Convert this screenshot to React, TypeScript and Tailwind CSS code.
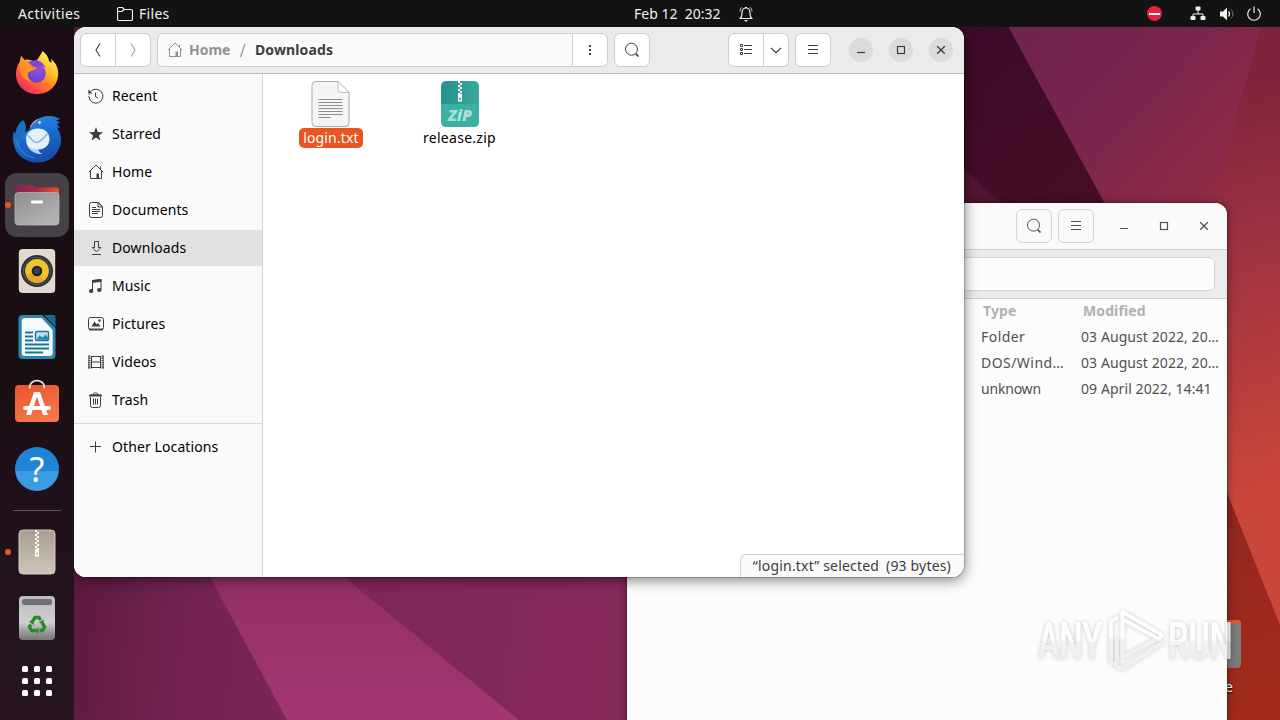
import type { ReactNode } from "react";

function Icon({ children, size = 16, className = "" }: { children: ReactNode; size?: number; className?: string }) {
  return (
    <svg width={size} height={size} viewBox="0 0 16 16" fill="none" stroke="currentColor" strokeWidth="1" className={"shrink-0 " + className}>
      {children}
    </svg>
  );
}

const HomeGlyph = () => (
  <>
    <path d="M.8 8.2 8 1l7.2 7.2M2.500 7v7.500h11V7M12.500 5.500V2.500" />
    <path d="M8.500 9.500h2.500v5H8.500z" fill="currentColor" stroke="none" />
  </>
);
const SearchGlyph = () => (
  <>
    <circle cx="7.500" cy="7.200" r="6" />
    <path d="m11.800 11.800 2.700 2.700" strokeWidth="1.700" />
  </>
);
const MenuGlyph = () => <path d="M3 3.500h10M3 7.500h10M3 11.500h10" />;

const glyphs: Record<string, ReactNode> = {
  Recent: (
    <>
      <path d="M2.200 4.200A7 7 0 1 1 1 9" strokeWidth="1" />
      <path d="M1 9a7 7 0 0 1 .3-3" strokeDasharray="1 1" />
      <path d="M.3 1.500v4h4z" fill="currentColor" stroke="none" />
      <path d="M7.500 4.500v4.200l2.500 1.300" />
    </>
  ),
  Starred: <path d="m8 1 1.800 5 5.200.2-4.100 3.200 1.500 5L8 11.500l-4.400 2.900 1.500-5L1 6.200 6.200 6z" fill="currentColor" stroke="none" />,
  Home: <HomeGlyph />,
  Documents: (
    <>
      <path d="M3.500.5h7l4 4v9a2 2 0 0 1-2 2h-9a2 2 0 0 1-2-2v-11a2 2 0 0 1 2-2z" />
      <path d="M10 .5v4.500h4.500zM4 5.500h4M4 7.500h8M4 9.500h8M4 11.500h6" />
    </>
  ),
  Downloads: <path d="M6.500 1.500h4v6h2.300L8.500 12 4.200 7.500h2.300zM4 14.500h9" />,
  Music: (
    <>
      <path d="M4.500 12.500v-10l8.500-1v10" />
      <path d="M4 2.300 13.500 1v2.800L4 5z" fill="currentColor" stroke="none" />
      <ellipse cx="3.200" cy="13" rx="2.200" ry="2" fill="currentColor" stroke="none" />
      <ellipse cx="11.300" cy="12" rx="2.200" ry="2" fill="currentColor" stroke="none" />
    </>
  ),
  Pictures: (
    <>
      <rect x=".5" y="1.500" width="15" height="12" rx="2" />
      <path d="M1 13.500h14" strokeWidth="1.800" />
      <path d="m3.500 10.500 3-5 2.200 3L10 7l2.500 3.500z" fill="currentColor" stroke="none" />
      <circle cx="11.500" cy="4.500" r="1.200" fill="currentColor" stroke="none" />
    </>
  ),
  Videos: (
    <>
      <path d="M3.500 2v12.500M12.500 2v12.500M3.500 2.500h9M3.500 8h9M3.500 13.500h9" />
      <path d="M1.500 1.500V15M14.500 1.500V15" strokeWidth="2" strokeDasharray="1.200 1" />
      <path d="M.8 1.500V15M15.300 1.500V15" strokeWidth=".8" />
    </>
  ),
  Trash: (
    <>
      <path d="M2.500 5v8.500a2 2 0 0 0 2 2h6a2 2 0 0 0 2-2V5" />
      <path d="M.8 4.500c0-1.800 1-2.300 3-2.300h7.400c2 0 3 .5 3 2.300z" fill="currentColor" stroke="none" />
      <path d="M5 2.500C5 .3 10 .3 10 2.500M5.500 6.500v6M7.500 6.500v6M9.500 6.500v6" />
    </>
  ),
  "Other Locations": <path d="M7.500 2.500v11M2 7.500h11" />,
};

const places = ["Recent", "Starred", "Home", "Documents", "Downloads", "Music", "Pictures", "Videos", "Trash"];

function Place({ name, active = false }: { name: string; active?: boolean }) {
  return (
    <div className={"flex h-9 items-center gap-2 pl-3.5 " + (active ? "bg-[#e1e1e1]" : "")}>
      <Icon className="text-[#3d3d3d]">{glyphs[name]}</Icon>
      <span className="tracking-[.1px] text-black">{name}</span>
    </div>
  );
}

function Wallpaper() {
  return (
    <svg className="absolute inset-0" width="1280" height="720" viewBox="0 0 1280 720">
      <defs>
        <linearGradient id="base" x1="74" x2="627" y1="600" y2="660" gradientUnits="userSpaceOnUse">
          <stop offset="0" stopColor="#5d1a3e" />
          <stop offset=".2" stopColor="#742350" />
          <stop offset=".5" stopColor="#7f2757" />
          <stop offset="1" stopColor="#862a5a" />
        </linearGradient>
        <linearGradient id="band" x1="0" x2="0" y1="577" y2="720" gradientUnits="userSpaceOnUse">
          <stop offset="0" stopColor="#932f64" />
          <stop offset="1" stopColor="#a23671" />
        </linearGradient>
        <linearGradient id="dark" x1="964" x2="1100" y1="27" y2="203" gradientUnits="userSpaceOnUse">
          <stop offset="0" stopColor="#3c0b28" />
          <stop offset="1" stopColor="#480d24" />
        </linearGradient>
        <linearGradient id="plum" x1="1030" x2="1220" y1="27" y2="200" gradientUnits="userSpaceOnUse">
          <stop offset="0" stopColor="#70244e" />
          <stop offset=".5" stopColor="#7c254c" />
          <stop offset="1" stopColor="#902c44" />
        </linearGradient>
        <linearGradient id="rose" x1="1215" x2="1330" y1="80" y2="480" gradientUnits="userSpaceOnUse">
          <stop offset="0" stopColor="#7d233c" />
          <stop offset=".35" stopColor="#9a3042" />
          <stop offset=".75" stopColor="#b93e3c" />
          <stop offset="1" stopColor="#cb463a" />
        </linearGradient>
        <linearGradient id="brick" x1="1227" x2="1280" y1="500" y2="700" gradientUnits="userSpaceOnUse">
          <stop offset="0" stopColor="#8f2622" />
          <stop offset=".5" stopColor="#9c291f" />
          <stop offset="1" stopColor="#a22b1a" />
        </linearGradient>
      </defs>
      <rect width="1280" height="720" fill="url(#base)" />
      <path d="M210 577h134l175 143H287z" fill="url(#band)" />
      <path d="M900 0h94l120 220H900z" fill="url(#dark)" />
      <path d="M964 168 1008 210H964z" fill="#541433" />
      <path d="M994 0h274l-60 220h-94z" fill="url(#plum)" />
      <path d="M1268 0h12v720h-72V220z" fill="url(#rose)" />
      <path d="M1220 475 1280 625v95h-60z" fill="url(#brick)" />
    </svg>
  );
}

function TopBar() {
  return (
    <header className="absolute inset-x-0 top-0 flex h-[27px] items-center bg-[#131313] text-[#f0f0f0]">
      <div className="flex w-[634px] items-center pl-[18px]">
        <span className="w-[99px] tracking-[.4px]">Activities</span>
        <Icon>
          <path d="M.5 4V3a1.500 1.500 0 0 1 1.500-1.500h3.500L7.200 3.500H14A1.500 1.500 0 0 1 15.500 5v8a1.500 1.500 0 0 1-1.500 1.500H2A1.500 1.500 0 0 1 .5 13V4c0 1 .5 1.500 1.500 1.500h3L7 3.500" strokeWidth="1.200" />
        </Icon>
        <span className="ml-1.5 tracking-[.3px]">Files</span>
      </div>
      <div className="flex w-[120px] items-center gap-[17px]">
        <span className="w-[87px] whitespace-pre">Feb 12  20:32</span>
        <Icon>
          <path d="M2.300 12.500c1.700-1.500 1.700-3 1.700-5.500 0-3 1.200-5 4-5s4 2 4 5c0 2.500 0 4 1.700 5.500zM7 1.500h2" strokeWidth="1.200" />
          <path d="M6 14h4l-2 2z" fill="currentColor" stroke="none" />
          <path d="M2 5.500C2 3.500 2.800 2 3.800 1.200M14 5.500c0-2-.8-3.500-1.800-4.300" strokeWidth=".8" />
        </Icon>
      </div>
      <div className="flex flex-1 items-center justify-end pr-[18px]">
        <div className="mr-7 flex size-[15px] items-center justify-center rounded-full bg-[#e5233f]">
          <div className="h-0.5 w-[11px] bg-white" />
        </div>
        <Icon className="mr-[13px]">
          <path d="M8 4v4M3 11V8h10v3" />
          <rect x="5.500" y=".5" width="5" height="4" rx="1" fill="currentColor" stroke="none" />
          <rect x=".5" y="10" width="5" height="4" rx="1" fill="currentColor" stroke="none" />
          <rect x="10.500" y="10" width="5" height="4" rx="1" fill="currentColor" stroke="none" />
        </Icon>
        <Icon className="mr-[11px]">
          <path d="M1 5.500h3L8 1.500v13l-4-4H1z" fill="currentColor" stroke="none" />
          <path d="M9.500 5.500c1.300 1.500 1.300 3.500 0 5" strokeWidth="1.200" />
          <path d="M12 3.500c2.500 3 2.500 6 0 9" stroke="#777" />
        </Icon>
        <Icon>
          <path d="M4.500 2.700a6.300 6.300 0 1 0 7 0M8 .5v6.500" strokeWidth="1.200" />
        </Icon>
      </div>
    </header>
  );
}

function Firefox() {
  return (
    <svg width="48" height="48" viewBox="0 0 48 48">
      <defs>
        <linearGradient id="fx" x1="38" y1="8" x2="12" y2="42" gradientUnits="userSpaceOnUse">
          <stop offset="0" stopColor="#fff04c" />
          <stop offset=".35" stopColor="#ffb126" />
          <stop offset=".65" stopColor="#ff6a2e" />
          <stop offset="1" stopColor="#f72a68" />
        </linearGradient>
        <radialGradient id="globe" cx=".6" cy=".2" r=".9">
          <stop offset="0" stopColor="#a04be0" />
          <stop offset="1" stopColor="#5b43cf" />
        </radialGradient>
      </defs>
      <path d="M29.500 2c4 3 6 6 6.500 10l2.500 2-.3-4c5 4.500 7 9 7 14.500C45.200 36.500 36 45 24 45S3 36.500 3 25c0-5.500 1.500-9 4-13l1-5.500 3.500 4.500c3-1 6.500-.5 9 2 3.500-1 6-5 9-11z" fill="url(#fx)" />
      <circle cx="23.500" cy="24.500" r="9.200" fill="url(#globe)" />
      <path d="M15 13.500c6-4 13-2 16 2.500l2 4c-4-4-7-3-9-2-2 0-5-1-9-4.500z" fill="#7d48d6" />
      <path d="M7 14c4-3 8-1 10 3 3 .7 5.500 1 6.500 1.800-.8 2.700-5 2.700-7.500 4.200-2.300 2-1.500 7 3 9.500-8-.5-13.500-7-12-18.500z" fill="#ff9027" />
    </svg>
  );
}

function Thunderbird() {
  return (
    <svg width="52" height="52" viewBox="0 0 52 52">
      <defs>
        <linearGradient id="tb" x1="0" x2=".3" y1="0" y2="1">
          <stop offset="0" stopColor="#2b8fe8" />
          <stop offset=".6" stopColor="#1a66c8" />
          <stop offset="1" stopColor="#1750ab" />
        </linearGradient>
      </defs>
      <path d="M12 7c4 4 3 9 2 14L9 40C3 34 0 27 3 18l1.500 3c.5-6 3-11 7.500-14z" fill="#1a6fc4" />
      <path d="M18 17c3-9 11-14 20-14 5 0 9 1.500 11 3.500l-4 .5 4 3-3 .5 3 4.500-3-.5c4 6 5 13 3 19-3 9-11 16-22 16C15 49.500 4 42 3 31c1 2 3 4 5 5-1-6 1-12 5-16z" fill="url(#tb)" />
      <path d="M19 14c2-5 6-8 9-8-3 2-6 4-8 8z" fill="#c9a4dc" />
      <circle cx="28.500" cy="9.500" r="1.300" fill="#e6f4ff" />
      <path d="M15 26c0-6 5-10.500 12-10.500S38.500 20 38.500 26 34 36.500 27 36.500c1 2.500 2 3.500 4 4.500-8 0-16-5-16-15z" fill="#e4f1fc" />
      <path d="M16.500 22c3 3.500 6.500 7.500 8.500 7.500 3 0 8-4.500 11.500-9" fill="none" stroke="#86b4dc" strokeWidth="1.500" />
      <path d="M17 31.500c2 4 6 5 10 5 1 2.500 2 3.500 4 4.500-6 .5-12-3-14-9.500z" fill="#a9d5f8" />
      <path d="M6 27c1 9 7 16 17 18" fill="none" stroke="#3c9cec" strokeWidth="1.500" opacity=".5" />
    </svg>
  );
}

function FolderIcon() {
  return (
    <svg width="46" height="42" viewBox="0 0 46 42">
      <defs>
        <linearGradient id="fb" x1="0" x2="1">
          <stop offset="0" stopColor="#7d2456" />
          <stop offset=".5" stopColor="#a8284a" />
          <stop offset="1" stopColor="#ef5526" />
        </linearGradient>
        <linearGradient id="ff" x1="0" x2=".7" y1="0" y2="1">
          <stop offset="0" stopColor="#8e8e8e" />
          <stop offset="1" stopColor="#b4b4b4" />
        </linearGradient>
      </defs>
      <path d="M1 14V4a3 3 0 0 1 3-3h13c2 0 3 2.500 5 2.500h20a3 3 0 0 1 3 3V14z" fill="url(#fb)" />
      <rect x="1" y="8.500" width="44" height="32.500" rx="3.500" fill="url(#ff)" stroke="#b5b5b5" strokeWidth=".8" />
      <rect x="17" y="16.500" width="12" height="3" rx="1" fill="#fff" />
    </svg>
  );
}

function Rhythmbox() {
  return (
    <svg width="38" height="46" viewBox="0 0 38 46">
      <rect x=".8" y="1" width="36.400" height="44" rx="4" fill="#dfd9cf" />
      <circle cx="19" cy="23" r="16" fill="#2c2f37" />
      <circle cx="19" cy="23" r="13.700" fill="none" stroke="#555963" strokeWidth="1" />
      <circle cx="19" cy="23" r="11.900" fill="#f3c12d" />
      <path d="M19 23 8 27a11.700 11.700 0 0 0 18 6z" fill="#e2ab22" />
      <circle cx="19" cy="23" r="5.300" fill="#1e242d" />
      <circle cx="19" cy="23" r="3" fill="#35414f" />
    </svg>
  );
}

function Writer() {
  return (
    <svg width="38" height="46" viewBox="0 0 38 46">
      <path d="M4 1h20l13 13v27a4 4 0 0 1-4 4H4a4 4 0 0 1-4-4V5a4 4 0 0 1 4-4z" transform="translate(.5)" fill="#2c86b0" />
      <path d="M6 4h17l11 12v23a3 3 0 0 1-3 3H6a3 3 0 0 1-3-3V7a3 3 0 0 1 3-3z" transform="translate(.7)" fill="#f5fafc" />
      <path d="M26 1h10a1.500 1.500 0 0 1 1.500 1.500V13z" fill="#1b6890" />
      <path d="M7 18.500h8M7 22.500h8M7 26.500h8M7 30.500h24M7 34.500h24M7 38.500h18" stroke="#18739e" strokeWidth="1.800" />
      <rect x="17.500" y="17.500" width="13" height="9" rx="1" fill="#bfe2f2" stroke="#18739e" strokeWidth="1.400" />
      <path d="m18.500 25.500 3-4 3 2 3-3 2.500 3v2.500z" fill="#2389ba" />
    </svg>
  );
}

function Software() {
  return (
    <svg width="46" height="48" viewBox="0 0 46 48" className="-mt-1">
      <defs>
        <linearGradient id="sw" x1="0" x2=".4" y1="0" y2="1">
          <stop offset="0" stopColor="#e75430" />
          <stop offset="1" stopColor="#f57647" />
        </linearGradient>
      </defs>
      <rect x="1" y="8" width="44" height="37" rx="4" fill="url(#sw)" />
      <path d="M15.800 11.500V10c0-8.500 14.400-8.500 14.400 0v1.500" fill="none" stroke="#e8e2dc" strokeWidth="1.700" />
      <path d="M20 15h6l8 23h-5L23 19.500 17 38h-5z" fill="#fff" />
      <rect x="9" y="29" width="28" height="4" rx="2" fill="#fff" />
    </svg>
  );
}

function Zipper({ x, y, count }: { x: number; y: number; count: number }) {
  return (
    <g transform={`translate(${x} ${y})`} fill="#fff">
      {Array.from({ length: count }, (_, i) => (
        <rect key={i} x={i % 2 ? 2 : 0} y={i * 2} width="2" height="2" />
      ))}
      <path d="M0 0h4v7.500H0zM1.200 3.500v2.500h1.600V3.500z" transform={`translate(0 ${count * 2 - 1})`} fillRule="evenodd" />
    </g>
  );
}

function Archive() {
  return (
    <svg width="38" height="46" viewBox="0 0 38 46">
      <defs>
        <linearGradient id="ar" x1="0" x2="0" y1="0" y2="1">
          <stop offset="0" stopColor="#a89f90" />
          <stop offset="1" stopColor="#cdc7ba" />
        </linearGradient>
      </defs>
      <rect x="1" y="1" width="36" height="44" rx="4" fill="url(#ar)" stroke="#d1cbc0" strokeWidth="1" />
      <Zipper x={17} y={1} count={10} />
    </svg>
  );
}

function TrashCan() {
  return (
    <svg width="38" height="46" viewBox="0 0 38 46">
      <defs>
        <linearGradient id="tc" x1="0" x2="0" y1="0" y2="1">
          <stop offset="0" stopColor="#bcbcbe" />
          <stop offset=".6" stopColor="#cfcfd1" />
          <stop offset=".75" stopColor="#a9a7a9" />
          <stop offset="1" stopColor="#77747a" />
        </linearGradient>
      </defs>
      <rect x="1" y="1" width="36" height="44" rx="4" fill="url(#tc)" />
      <rect x="4" y="4" width="30" height="6" rx="2.500" fill="#707072" />
      <g fill="none" stroke="#2b8a25" strokeWidth="3.400">
        {[0, 120, 240].map((a) => (
          <g key={a} transform={`rotate(${a} 19 30)`}>
            <path d="m14.500 26.500 2.500-4h4l1.500 2.500" />
            <path d="m20.500 27.500 5-3 .3 5z" fill="#2b8a25" stroke="none" />
          </g>
        ))}
      </g>
    </svg>
  );
}

function DockItem({ children, active = false, running = false }: { children: ReactNode; active?: boolean; running?: boolean }) {
  return (
    <div className={"relative flex size-16 shrink-0 items-center justify-center rounded-xl " + (active ? "bg-[#464047]" : "")}>
      {running && <span className="absolute top-[29px] left-0 size-1.5 rounded-full bg-[#e95420]" />}
      {children}
    </div>
  );
}

function Dock() {
  return (
    <nav className="absolute top-[27px] bottom-0 left-0 flex w-[74px] flex-col items-center gap-0.5 bg-linear-to-b from-[#1a0c14] via-[#1a0e15] to-[#281520] pt-3.5">
      <DockItem><Firefox /></DockItem>
      <DockItem><Thunderbird /></DockItem>
      <DockItem active running><FolderIcon /></DockItem>
      <DockItem><Rhythmbox /></DockItem>
      <DockItem><Writer /></DockItem>
      <DockItem><Software /></DockItem>
      <DockItem>
        <div className="flex size-11 items-center justify-center rounded-full bg-linear-to-b from-[#1f84d6] from-55% to-[#3a9ce2] to-55% text-[34px] leading-none text-white">?</div>
      </DockItem>
      <div className="mt-[7px] mb-[7px] h-px w-12 shrink-0 bg-[#5d565b]" />
      <DockItem running><Archive /></DockItem>
      <DockItem><TrashCan /></DockItem>
      <div className="mt-3.5 grid grid-cols-3 gap-1.5">
        {[0, 1, 2, 3, 4, 5, 6, 7, 8].map((i) => (
          <span key={i} className="size-1.5 rounded-[1.5px] bg-white" />
        ))}
      </div>
    </nav>
  );
}

const btn = "flex h-[34px] items-center justify-center border border-[#cdcdcd] bg-white text-[#3d3d3d] ";

const MinGlyph = () => <path d="M4 10.500h8" strokeWidth="1.200" />;
const MaxGlyph = () => <rect x="4.500" y="4.500" width="7" height="7" strokeWidth="1.200" />;
const CloseGlyph = () => <path d="m4.200 4.200 7.600 7.600m0-7.600-7.600 7.600" strokeWidth="1.300" />;

function ArchiveWindow() {
  const rows = [
    ["Folder", "03 August 2022, 20…"],
    ["DOS/Wind…", "03 August 2022, 20…"],
    ["unknown", "09 April 2022, 14:41"],
  ];
  return (
    <section className="absolute top-[203px] left-[627px] flex h-[530px] w-[600px] flex-col overflow-hidden rounded-t-xl bg-[#fcfcfc] text-[#505050] shadow-[0_1px_10px_rgba(0,0,0,0.45),0_0_0_1px_rgba(0,0,0,0.12)]">
      <div className="flex h-[47px] shrink-0 items-center justify-end border-b border-[#d0d0d0] bg-[#fafafa] pr-[15px]">
        <div className="mr-1.5 flex h-[34px] w-9 items-center justify-center rounded-md border border-[#d4d4d4]"><Icon><SearchGlyph /></Icon></div>
        <div className="mr-[22px] flex h-[34px] w-9 items-center justify-center rounded-md border border-[#d4d4d4]"><Icon><MenuGlyph /></Icon></div>
        <Icon className="mr-6"><MinGlyph /></Icon>
        <Icon className="mr-6"><MaxGlyph /></Icon>
        <Icon><CloseGlyph /></Icon>
      </div>
      <div className="flex h-[49px] shrink-0 items-center border-b border-[#d0d0d0] bg-[#ebebeb] px-3">
        <div className="h-[34px] flex-1 rounded-md border border-[#d4d4d4] bg-[#fcfcfc]" />
      </div>
      <div className="flex flex-col pl-[354px]">
        <div className="flex h-[25px] items-center pb-0.5 pl-0.5 font-bold text-[#b1b1b1]">
          <span className="w-[100px] tracking-[.1px]">Type</span>
          <span className="tracking-[.1px]">Modified</span>
        </div>
        {rows.map(([type, date]) => (
          <div key={type} className="flex h-[26px] items-center whitespace-nowrap">
            <span className={"w-[100px] " + (type === "unknown" ? "-tracking-[.2px]" : "tracking-[.45px]")}>{type}</span>
            <span className="tracking-[.08px]">{date}</span>
          </div>
        ))}
      </div>
    </section>
  );
}

function FilesWindow() {
  return (
    <section className="absolute top-[27px] left-[74px] flex h-[550px] w-[890px] flex-col rounded-xl bg-white shadow-[0_3px_14px_rgba(0,0,0,0.5),0_0_0_1px_rgba(0,0,0,0.2)]">
      <div className="flex h-[47px] shrink-0 items-center rounded-t-xl border-b border-[#bdbdbd] bg-[#ebebeb] pr-[11px] pl-1.5">
        <div className={btn + "w-9 rounded-l-md"}><Icon><path d="m10 1.500-4 6.500 4 6.500" strokeWidth="1.100" /></Icon></div>
        <div className={btn + "w-[35px] rounded-r-md border-l-0 bg-[#fafafa]"}><Icon className="text-[#a0a0a0]"><path d="m6 1.500 4 6.500-4 6.500" strokeWidth="1.100" /></Icon></div>
        <div className="ml-1.5 flex h-[34px] w-[416px] items-center rounded-l-md border border-[#cdcdcd] bg-[#fafafa] pl-[9px] font-bold">
          <Icon className="text-[#929292]"><HomeGlyph /></Icon>
          <span className="ml-1.5 w-[50px] text-[#929292]">Home</span>
          <svg width="16" height="16" viewBox="0 0 16 16" className="shrink-0"><path d="M6 2 1.500 15" stroke="#929292" strokeWidth="1.200" /></svg>
          <span className="tracking-[.12px] text-[#3d3d3d]">Downloads</span>
        </div>
        <div className={btn + "w-[35px] rounded-r-md border-l-0"}>
          <Icon><path d="M8 3v2M8 7v2M8 11v2" strokeWidth="2" /></Icon>
        </div>
        <div className={btn + "ml-1.5 w-9 rounded-md"}><Icon><SearchGlyph /></Icon></div>
        <div className={btn + "ml-[78px] w-9 rounded-l-md"}>
          <Icon>
            <path d="M2.500 2.500h2v2h-2zM2.500 6.500h2v2h-2zM2.500 10.500h2v2h-2zM6 3.500h8M6 7.500h8M6 11.500h8" />
          </Icon>
        </div>
        <div className={btn + "w-[25px] rounded-r-md border-l-0"}><Icon className="-mx-1"><path d="m3 6 5 4.700L13 6" strokeWidth="1.100" /></Icon></div>
        <div className={btn + "ml-1.5 w-9 rounded-md"}><Icon><MenuGlyph /></Icon></div>
        <div className="ml-[18px] flex gap-4 text-[#3d3d3d]">
          <div className="flex size-6 items-center justify-center rounded-full bg-[#dbdbdb]"><Icon><MinGlyph /></Icon></div>
          <div className="flex size-6 items-center justify-center rounded-full bg-[#dbdbdb]"><Icon><MaxGlyph /></Icon></div>
          <div className="flex size-6 items-center justify-center rounded-full bg-[#dbdbdb]"><Icon><CloseGlyph /></Icon></div>
        </div>
      </div>
      <div className="flex min-h-0 flex-1">
        <aside className="flex w-[189px] flex-col gap-0.5 rounded-bl-xl border-r border-[#d3d3d3] bg-[#fafafa] pt-1">
          {places.map((p) => (
            <Place key={p} name={p} active={p === "Downloads"} />
          ))}
          <div className="my-[3px] h-px bg-[#d9d9d9]" />
          <Place name="Other Locations" />
        </aside>
        <main className="flex flex-1 flex-col justify-between">
          <div className="flex pt-1.5 pl-[3px]">
            <div className="flex w-[129px] flex-col items-center">
              <svg width="40" height="48" viewBox="0 0 40 48">
                <path d="M5 1.500h22l11 11v30a4 4 0 0 1-4 4H5a4 4 0 0 1-4-4v-37a4 4 0 0 1 4-4z" fill="#f5f5f5" stroke="#a9a9a9" />
                <path d="M27 1.500v7a4 4 0 0 0 4 4h7z" fill="#fff" stroke="#bdbdbd" />
                <path d="M7.500 19.500h24M7.500 22.500h24M7.500 25.500h24M7.500 28.500h24M7.500 31.500h24M7.500 34.500h24M7.500 37.500h12" stroke="#8f8f8f" />
              </svg>
              <span className="ml-px flex h-5 w-16 items-center justify-center rounded-[5px] bg-[#e95420] tracking-[.15px] text-white">login.txt</span>
            </div>
            <div className="flex w-[129px] flex-col items-center">
              <svg width="40" height="48" viewBox="0 0 40 48">
                <defs>
                  <linearGradient id="zp" x1="0" x2="1" y1="0" y2="0">
                    <stop offset="0" stopColor="#28908f" />
                    <stop offset="1" stopColor="#38a99b" />
                  </linearGradient>
                </defs>
                <rect x="1" y="1" width="38" height="46" rx="5" fill="url(#zp)" />
                <path d="M1 24h38v18a5 5 0 0 1-5 5H6a5 5 0 0 1-5-5z" fill="#3bb0a3" />
                <Zipper x={18} y={1} count={7} />
                <text x="8" y="41" fontFamily="Open Sans, sans-serif" fontWeight="800" fontStyle="italic" fontSize="16" textLength="24" lengthAdjust="spacingAndGlyphs" fill="#a9e0d5">ZiP</text>
              </svg>
              <span className="flex h-5 items-center tracking-[.28px] text-black">release.zip</span>
            </div>
          </div>
          <div className="flex h-[23px] items-center gap-[7px] self-end rounded-tl-md rounded-br-xl border-t border-l border-[#d3d3d3] bg-[#fafafa] pr-[13px] pl-3 tracking-[.18px] whitespace-nowrap text-[#3d3d3d]">
            <span>“login.txt” selected</span>
            <span>(93 bytes)</span>
          </div>
        </main>
      </div>
    </section>
  );
}

function DesktopFolder() {
  return (
    <div className="absolute top-[618px] left-[1193px] flex w-12 flex-col items-center">
      <svg width="48" height="52" viewBox="0 0 48 52">
        <path d="M0 12V5a3 3 0 0 1 3-3h42a3 3 0 0 1 3 3v7z" fill="#ee5423" />
        <rect y="5" width="48" height="45" rx="4" fill="#7c7e7d" />
      </svg>
      <span className="mt-[7px] mr-2 self-end text-white [text-shadow:0_1px_2px_#000]">Home</span>
    </div>
  );
}

function Watermark() {
  return (
    <svg className="absolute top-[600px] left-[1024px]" width="256" height="84" viewBox="0 0 256 84">
      <defs>
        <linearGradient id="wm" x1="0" x2="0" y1="22" y2="62" gradientUnits="userSpaceOnUse">
          <stop offset=".46" stopColor="#fff" />
          <stop offset=".48" stopColor="#f0f0f0" />
          <stop offset="1" stopColor="#e8e8e8" />
        </linearGradient>
        <filter id="ws" x="-20%" y="-20%" width="140%" height="140%">
          <feDropShadow dx="0" dy="0" stdDeviation="2" floodColor="#000" floodOpacity=".3" />
        </filter>
      </defs>
      <g filter="url(#ws)" opacity=".75">
        <text x="14" y="59" fontFamily="Roboto, sans-serif" fontWeight="500" fontSize="51" textLength="64" lengthAdjust="spacingAndGlyphs" fill="url(#wm)">ANY</text>
        <text x="144" y="59" fontFamily="Roboto, sans-serif" fontWeight="500" fontSize="51" textLength="65" lengthAdjust="spacingAndGlyphs" fill="url(#wm)">RUN</text>
        <g fill="none" strokeWidth="3.500" strokeLinejoin="round" strokeLinecap="round">
          <path d="M98.500 40V12L138 35l-3 4-34-18.500" stroke="#fff" />
          <path d="M93 18l-6 3v19" stroke="#fff" />
          <path d="M98.500 40v17.500L131 40M87 40v22l6 3V40M98 69l40-26M93 67l5 2" stroke="#ececec" />
        </g>
      </g>
    </svg>
  );
}

export default function App() {
  return (
    <div className="relative h-[720px] w-[1280px] overflow-hidden bg-[#5d1a3e] font-['Noto_Sans','Open_Sans',sans-serif] text-[14px] leading-5">
      <Wallpaper />
      <DesktopFolder />
      <ArchiveWindow />
      <FilesWindow />
      <TopBar />
      <Dock />
      <Watermark />
    </div>
  );
}
